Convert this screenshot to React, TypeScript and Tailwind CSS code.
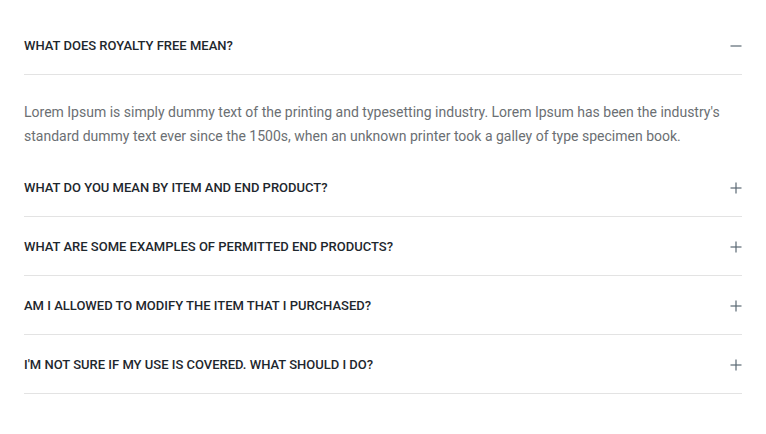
import React, { useState } from "react";

const items = [
  {
    q: "WHAT DOES ROYALTY FREE MEAN?",
    a: "Lorem Ipsum is simply dummy text of the printing and typesetting industry. Lorem Ipsum has been the industry's standard dummy text ever since the 1500s, when an unknown printer took a galley of type specimen book.",
  },
  { q: "WHAT DO YOU MEAN BY ITEM AND END PRODUCT?", a: "Lorem Ipsum is simply dummy text of the printing and typesetting industry." },
  { q: "WHAT ARE SOME EXAMPLES OF PERMITTED END PRODUCTS?", a: "Lorem Ipsum is simply dummy text of the printing and typesetting industry." },
  { q: "AM I ALLOWED TO MODIFY THE ITEM THAT I PURCHASED?", a: "Lorem Ipsum is simply dummy text of the printing and typesetting industry." },
  { q: "I'M NOT SURE IF MY USE IS COVERED. WHAT SHOULD I DO?", a: "Lorem Ipsum is simply dummy text of the printing and typesetting industry." },
];

function Icon({ open }: { open: boolean }) {
  return (
    <svg width="12" height="12" viewBox="0 0 12 12" className="shrink-0">
      <line x1="0.5" y1="6" x2="11.5" y2="6" stroke="#5a6873" strokeWidth="1.2" />
      {!open && <line x1="6" y1="0.5" x2="6" y2="11.5" stroke="#5a6873" strokeWidth="1.2" />}
    </svg>
  );
}

export default function App() {
  const [open, setOpen] = useState<number>(0);
  return (
    <div className="w-[766px] h-[434px] bg-white px-6 pt-[16px]" style={{ fontFamily: "Roboto, 'Liberation Sans', sans-serif" }}>
      {items.map((it, i) => (
        <div key={i}>
          <button
            onClick={() => setOpen(open === i ? -1 : i)}
            className="w-full flex items-center justify-between pt-[22px] pb-[21px] border-b border-[#e3e3e3] text-left"
          >
            <span className="text-[13px] leading-[15px] font-medium text-[#1e272d]">{it.q}</span>
            <Icon open={open === i} />
          </button>
          {open === i && (
            <p className="pt-[25px] pb-[10px] text-[14px] leading-[24px] text-[#6b6f73]">{it.a}</p>
          )}
        </div>
      ))}
    </div>
  );
}
